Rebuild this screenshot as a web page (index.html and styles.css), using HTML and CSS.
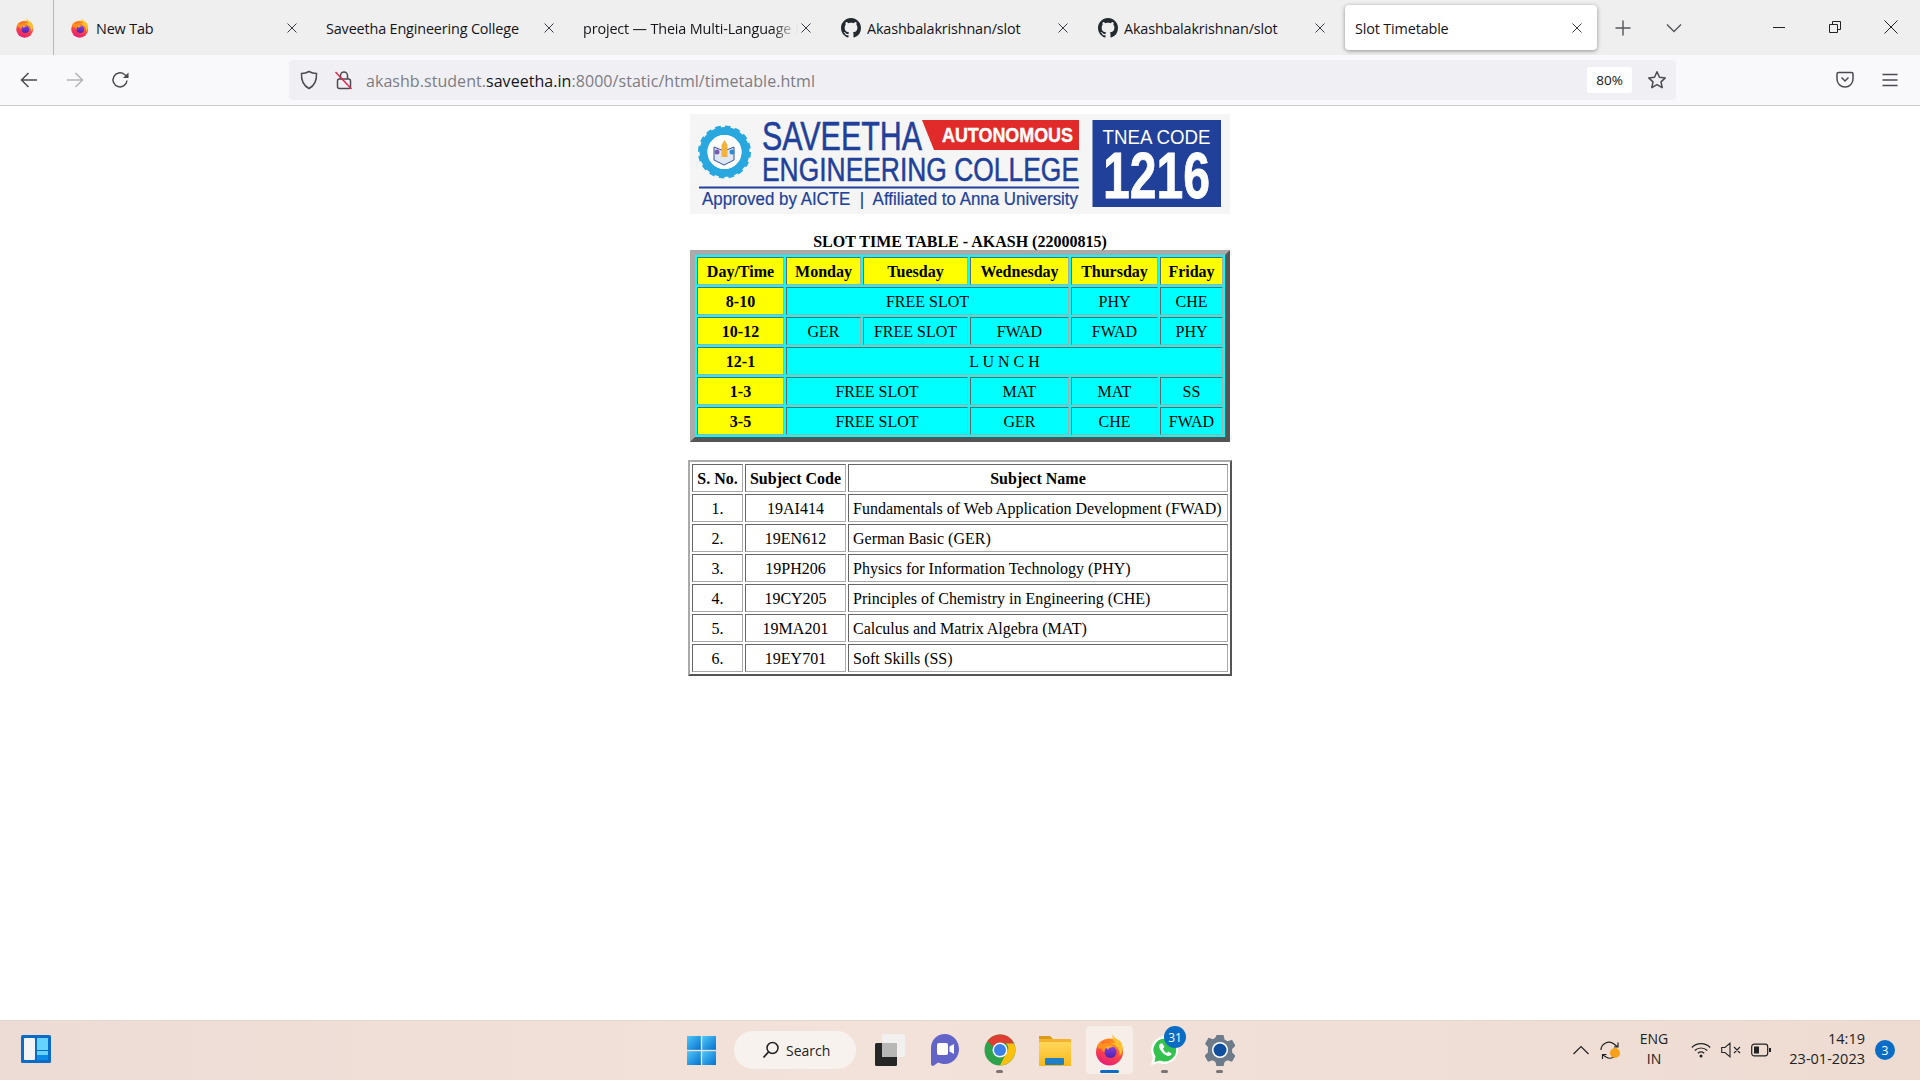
FILE: index.html
```html
<!DOCTYPE html>
<html lang="en">
<head>
<meta charset="utf-8">
<title>Slot Timetable</title>
<link rel="stylesheet" href="styles.css">
</head>
<body>
<svg class="defs" width="0" height="0" aria-hidden="true">
  <defs>
    <linearGradient id="ffBase" x1="0.7" y1="0" x2="0.3" y2="1">
      <stop offset="0" stop-color="#ff9a16"/><stop offset="0.5" stop-color="#ff4a3e"/><stop offset="1" stop-color="#e5197f"/>
    </linearGradient>
    <linearGradient id="ffCore" x1="0.5" y1="0" x2="0.5" y2="1">
      <stop offset="0" stop-color="#8a3fe0"/><stop offset="1" stop-color="#4b24b0"/>
    </linearGradient>
    <linearGradient id="winBlue" x1="0" y1="0" x2="1" y2="1">
      <stop offset="0" stop-color="#4fc8f8"/><stop offset="1" stop-color="#0670d0"/>
    </linearGradient>
    <linearGradient id="folderFront" x1="0" y1="0" x2="0" y2="1">
      <stop offset="0" stop-color="#ffd75a"/><stop offset="1" stop-color="#f9b81c"/>
    </linearGradient>
    <symbol id="firefox" viewBox="2 0 28 32">
      <circle cx="15.500" cy="18" r="13.500" fill="url(#ffBase)"/>
      <path d="M18.500 0c-.5 4 1 7 3 9-2.500-.5-4-.5-6 0 3 .5 6 2 8 5 2 3 2.500 5 2 8 3-3 4-8 2.500-12-1-2.500-3-4-4.500-4.500C21 4 19 2 18.500 0z" fill="#ffc22e"/>
      <path d="M3 12.500C4 9.500 6 7.500 8 6.500c-.5 1.500-.3 2.700.3 3.500 3-2 8-1.500 11 1 2 1.500 3 4 3 6-2-3-5-4-8-3-3 1-3 3-2 5-3-1-5-3-5.500-5-1 1-3 2.500-2.800-1.500z" fill="#ff8f1f"/>
      <circle cx="16.500" cy="18" r="6" fill="url(#ffCore)"/>
      <path d="M11 14c2-2.500 6-2.800 8.500-1-2.500 0-5 .8-5.500 3-.5-1.500-1.500-2-3-2z" fill="#ffae2a"/>
    </symbol>
    <symbol id="github" viewBox="0 0 16 16">
      <path fill="#24292f" d="M8 0C3.580 0 0 3.580 0 8c0 3.540 2.290 6.530 5.470 7.590.4.070.55-.17.55-.38 0-.19-.01-.82-.01-1.490-2.010.37-2.530-.49-2.690-.94-.09-.23-.48-.94-.82-1.130-.28-.15-.68-.52-.01-.53.63-.01 1.080.58 1.230.82.72 1.210 1.870.87 2.330.66.070-.52.28-.87.51-1.070-1.780-.2-3.640-.89-3.640-3.950 0-.87.31-1.590.82-2.150-.08-.2-.36-1.020.08-2.120 0 0 .67-.21 2.200.82.64-.18 1.320-.27 2-.27.68 0 1.360.09 2 .27 1.530-1.040 2.200-.82 2.200-.82.44 1.100.16 1.920.08 2.120.51.56.82 1.270.82 2.150 0 3.070-1.870 3.750-3.650 3.950.29.25.54.73.54 1.480 0 1.070-.01 1.930-.01 2.200 0 .21.15.46.55.38A8.013 8.013 0 0016 8c0-4.420-3.580-8-8-8z"/>
    </symbol>
    <symbol id="close" viewBox="0 0 12 12">
      <path d="M1.500 1.500l9 9M10.500 1.500l-9 9" fill="none" stroke="#3a3a40" stroke-width="1"/>
    </symbol>
  </defs>
</svg>

<header class="tabstrip">
  <div class="app-slot"><svg class="ico-20"><use href="#firefox"/></svg></div>
  <div class="tabs">
    <div class="tab"><svg class="ico-20 tab-ico"><use href="#firefox"/></svg><span class="tab-title">New Tab</span><svg class="tab-x"><use href="#close"/></svg></div>
    <div class="tab tab-plain"><span class="tab-title">Saveetha Engineering College</span><svg class="tab-x"><use href="#close"/></svg></div>
    <div class="tab tab-plain"><span class="tab-title tab-fade">project — Theia Multi-Language IDE</span><svg class="tab-x"><use href="#close"/></svg></div>
    <div class="tab"><svg class="ico-20 tab-ico"><use href="#github"/></svg><span class="tab-title">Akashbalakrishnan/slot</span><svg class="tab-x"><use href="#close"/></svg></div>
    <div class="tab"><svg class="ico-20 tab-ico"><use href="#github"/></svg><span class="tab-title">Akashbalakrishnan/slot</span><svg class="tab-x"><use href="#close"/></svg></div>
    <div class="tab tab-active"><span class="tab-title">Slot Timetable</span><svg class="tab-x"><use href="#close"/></svg></div>
  </div>
  <div class="strip-btn strip-new"><svg width="18" height="18" viewBox="0 0 18 18"><path d="M9 1.500v15M1.500 9h15" stroke="#55555c" stroke-width="1.400" fill="none"/></svg></div>
  <div class="strip-btn strip-more"><svg width="18" height="18" viewBox="0 0 18 18"><path d="M2 5.500l7 7 7-7" stroke="#55555c" stroke-width="1.400" fill="none"/></svg></div>
  <div class="window-ctrls">
    <div class="win-btn"><svg width="14" height="14" viewBox="0 0 14 14"><path d="M1 7.500h12" stroke="#222" fill="none"/></svg></div>
    <div class="win-btn"><svg width="14" height="14" viewBox="0 0 14 14"><path d="M1.500 4.500h8v8h-8zM4.500 4.500v-3h8v8h-3" stroke="#222" fill="none"/></svg></div>
    <div class="win-btn"><svg width="14" height="14" viewBox="0 0 14 14"><path d="M.5.500l13 13M13.500.500l-13 13" stroke="#222" fill="none"/></svg></div>
  </div>
</header>

<nav class="toolbar">
  <div class="nav-btn"><svg width="20" height="20" viewBox="0 0 20 20"><path d="M18 10H2.500M9.500 3l-7 7 7 7" fill="none" stroke="#4a4a50" stroke-width="1.500"/></svg></div>
  <div class="nav-btn"><svg width="20" height="20" viewBox="0 0 20 20"><path d="M2 10h15.500M10.500 3l7 7-7 7" fill="none" stroke="#b4b4b8" stroke-width="1.500"/></svg></div>
  <div class="nav-btn"><svg width="20" height="20" viewBox="0 0 20 20"><path d="M16 10.500a7 7 0 1 1-2.500-6L17 7" fill="none" stroke="#4a4a50" stroke-width="1.500"/><path d="M17.500 2.500v5.500H12z" fill="#4a4a50"/></svg></div>
  <div class="urlbar">
    <svg class="url-ico" width="20" height="20" viewBox="0 0 20 20"><path d="M10 1.500c2.500 1.500 5 2 7.500 2 .3 6.500-1.500 12-7.500 15-6-3-7.800-8.500-7.500-15 2.500 0 5-.5 7.500-2z" fill="none" stroke="#4a4a50" stroke-width="1.500"/></svg>
    <svg class="url-ico url-lock" width="20" height="20" viewBox="0 0 20 20"><rect x="3.500" y="9" width="13" height="9.500" rx="2" fill="none" stroke="#4a4a50" stroke-width="1.500"/><path d="M6.500 9V5.500a3.500 3.500 0 0 1 7 0V9" fill="none" stroke="#4a4a50" stroke-width="1.500"/><path d="M1.500 2l16 17" stroke="#e22850" stroke-width="1.500"/></svg>
    <div class="url-text">akashb.student.<span class="url-domain">saveetha.in</span>:8000/static/html/timetable.html</div>
    <div class="zoom-badge">80%</div>
    <svg class="url-star" width="20" height="20" viewBox="0 0 20 20"><path d="M10 1.800l2.500 5.400 5.800.7-4.300 4 1.200 5.800-5.200-3-5.200 3 1.200-5.800-4.300-4 5.800-.7z" fill="none" stroke="#4a4a50" stroke-width="1.500" stroke-linejoin="round"/></svg>
  </div>
  <div class="tool-right">
    <div class="tool-btn"><svg width="20" height="20" viewBox="0 0 20 20"><path d="M3.500 2.500h13A1.500 1.500 0 0 1 18 4v5a8 8 0 0 1-16 0V4a1.500 1.500 0 0 1 1.500-1.500z" fill="none" stroke="#4a4a50" stroke-width="1.500"/><path d="M6.500 7.500L10 11l3.500-3.500" fill="none" stroke="#4a4a50" stroke-width="1.500"/></svg></div>
    <div class="tool-btn"><svg width="20" height="20" viewBox="0 0 20 20"><path d="M2.500 4.500h15M2.500 10h15M2.500 15.500h15" fill="none" stroke="#4a4a50" stroke-width="1.500"/></svg></div>
  </div>
</nav>

<main class="page">
  <svg class="logo" width="540" height="100" viewBox="0 0 540 100" role="img" aria-label="Saveetha Engineering College">
    <rect width="540" height="100" fill="#f5f5f5"/>
    <circle cx="34.500" cy="38" r="21" fill="none" stroke="#29a8df" stroke-width="8"/>
    <circle cx="34.500" cy="38" r="24.500" fill="none" stroke="#29a8df" stroke-width="4" stroke-dasharray="5.500 4.100"/>
    <circle cx="34.500" cy="38" r="17" fill="#fff"/>
    <path d="M24 33l10 4 10-4v13l-10 5-10-5z" fill="#dfe6f4" stroke="#31509f" stroke-width="1"/>
    <path d="M34.500 26l3 5v12h-6V31z" fill="#f3b23a"/>
    <circle cx="27" cy="38" r="2.500" fill="#7a5bb0"/><circle cx="42" cy="38" r="2.500" fill="#2c8fd0"/>
    <g class="logo-blue">
      <text class="logo-big" x="72" y="36" textLength="160" lengthAdjust="spacingAndGlyphs">SAVEETHA</text>
      <text class="logo-mid" x="72" y="67" textLength="317" lengthAdjust="spacingAndGlyphs">ENGINEERING COLLEGE</text>
      <text class="logo-sub" x="12" y="91" textLength="376" lengthAdjust="spacingAndGlyphs">Approved by AICTE  |  Affiliated to Anna University</text>
    </g>
    <path d="M232 6h157v30H244z" fill="#e12a2a"/>
    <text class="logo-auto" x="252" y="28" textLength="131" lengthAdjust="spacingAndGlyphs">AUTONOMOUS</text>
    <rect x="9" y="72.500" width="380" height="2" fill="#21409a"/>
    <rect x="402.500" y="6" width="128.500" height="87" fill="#21409a"/>
    <text class="logo-tnea" x="412.500" y="30" textLength="108" lengthAdjust="spacingAndGlyphs">TNEA CODE</text>
    <text class="logo-code" x="413" y="84" textLength="107" lengthAdjust="spacingAndGlyphs">1216</text>
  </svg>

  <table class="tbl slot">
    <caption class="slot-caption">SLOT TIME TABLE - AKASH (22000815)</caption>
    <colgroup><col class="s1"><col class="s2"><col class="s3"><col class="s4"><col class="s5"><col class="s6"></colgroup>
    <tr><th class="hd">Day/Time</th><th class="hd">Monday</th><th class="hd">Tuesday</th><th class="hd">Wednesday</th><th class="hd">Thursday</th><th class="hd">Friday</th></tr>
    <tr><th class="hd">8-10</th><td colspan="3">FREE SLOT</td><td>PHY</td><td>CHE</td></tr>
    <tr><th class="hd">10-12</th><td>GER</td><td>FREE SLOT</td><td>FWAD</td><td>FWAD</td><td>PHY</td></tr>
    <tr><th class="hd">12-1</th><td colspan="5">L U N C H</td></tr>
    <tr><th class="hd">1-3</th><td colspan="2">FREE SLOT</td><td>MAT</td><td>MAT</td><td>SS</td></tr>
    <tr><th class="hd">3-5</th><td colspan="2">FREE SLOT</td><td>GER</td><td>CHE</td><td>FWAD</td></tr>
  </table>

  <table class="tbl subjects">
    <colgroup><col class="c1"><col class="c2"><col class="c3"></colgroup>
    <tr><th>S. No.</th><th>Subject Code</th><th>Subject Name</th></tr>
    <tr><td>1.</td><td>19AI414</td><td class="name">Fundamentals of Web Application Development (FWAD)</td></tr>
    <tr><td>2.</td><td>19EN612</td><td class="name">German Basic (GER)</td></tr>
    <tr><td>3.</td><td>19PH206</td><td class="name">Physics for Information Technology (PHY)</td></tr>
    <tr><td>4.</td><td>19CY205</td><td class="name">Principles of Chemistry in Engineering (CHE)</td></tr>
    <tr><td>5.</td><td>19MA201</td><td class="name">Calculus and Matrix Algebra (MAT)</td></tr>
    <tr><td>6.</td><td>19EY701</td><td class="name">Soft Skills (SS)</td></tr>
  </table>
</main>

<footer class="taskbar">
  <div class="tb-left">
    <svg width="30" height="28" viewBox="0 0 30 28"><rect width="30" height="28" rx="1.500" fill="#0a6cc4"/><rect x="3" y="3" width="11" height="22" rx="1" fill="#f4f4f4"/><rect x="16" y="3" width="11" height="22" fill="#66d2ff"/><rect x="16" y="15" width="11" height="1" fill="#0a6cc4"/><rect x="16" y="20" width="11" height="5" fill="#0a8be8"/></svg>
  </div>
  <div class="tb-center">
    <div class="tb-slot"><svg width="29" height="29" viewBox="0 0 30 30"><rect x="0" y="0" width="14.300" height="14.300" fill="url(#winBlue)"/><rect x="15.700" y="0" width="14.300" height="14.300" fill="url(#winBlue)"/><rect x="0" y="15.700" width="14.300" height="14.300" fill="url(#winBlue)"/><rect x="15.700" y="15.700" width="14.300" height="14.300" fill="url(#winBlue)"/></svg></div>
    <div class="tb-search"><svg width="18" height="18" viewBox="0 0 18 18"><circle cx="10.500" cy="7" r="5.500" fill="none" stroke="#222" stroke-width="1.500"/><path d="M6.500 11L1.500 16.500" stroke="#222" stroke-width="1.800"/></svg><span>Search</span></div>
    <div class="tb-slot"><svg width="30" height="32" viewBox="0 0 30 32"><rect x="0" y="9" width="22" height="23" rx="1.500" fill="#262626"/><rect x="7" y="0" width="23" height="23" rx="1.500" fill="#f3f1ef"/><rect x="7" y="9" width="15" height="14" fill="#b9b7b5"/></svg></div>
    <div class="tb-slot"><svg width="30" height="34" viewBox="0 0 30 34"><path d="M15 1C7 1 1 7 1 15v16c0 1.500 1.500 2.500 3 1.500l4-3c2 .8 4.500 1.500 7 1.500 8 0 14-7 14-15S23 1 15 1z" fill="#6264c8"/><rect x="7" y="10" width="11" height="12" rx="2" fill="#fff"/><path d="M19.500 13.500l4.500-2.500v10l-4.500-2.500z" fill="#fff"/></svg></div>
    <div class="tb-slot tb-dot"><svg width="32" height="34" viewBox="0 0 32 34"><circle cx="16" cy="17" r="15.500" fill="#2ea24b"/><path d="M16 1.500A15.500 15.500 0 0 1 30 10.500H16a6.500 6.500 0 0 0-6 4L3.500 8A15.500 15.500 0 0 1 16 1.500z" fill="#dd3e31"/><path d="M30 10.500A15.500 15.500 0 0 1 16 32.500l6-12a6.500 6.500 0 0 0 0-10z" fill="#fbc00d"/><circle cx="16" cy="17" r="7.500" fill="#fff"/><circle cx="16" cy="17" r="6" fill="#3b7fe8"/></svg></div>
    <div class="tb-slot"><svg width="32" height="32" viewBox="0 0 32 32"><path d="M0 2h11l3 3h-14z" fill="#d99c1a"/><rect x="0" y="5" width="32" height="27" rx="1" fill="#f4b32a"/><rect x="0" y="8" width="32" height="24" rx="1" fill="url(#folderFront)"/><rect x="6" y="24" width="19" height="7" rx="1" fill="#1f80c8"/></svg></div>
    <div class="tb-slot tb-active"><svg width="28" height="32"><use href="#firefox"/></svg></div>
    <div class="tb-slot tb-dot"><svg width="30" height="32" viewBox="0 0 30 32"><path d="M15 2a14 14 0 0 0-12 21L1 31l8-2a14 14 0 1 0 6-27z" fill="#fff"/><path d="M15 4.500A11.500 11.500 0 0 0 5.500 22.500L4.500 28l5.500-1.500A11.500 11.500 0 1 0 15 4.500z" fill="#33c24e"/><path d="M10.500 9.500c-1.500 1-2 3 0 6.500s5 5.500 7.500 6c2 .3 3.500-1 3.500-2.500l-3-2-1.500 1.500c-2-1-3.500-2.500-4-4.500l1.500-1.500-2-3.500z" fill="#fff"/></svg><span class="count-badge">31</span></div>
    <div class="tb-slot tb-dot"><svg width="30" height="32" viewBox="0 0 30 32"><path d="M11.500 1h7l1 4.500 3 1.700 4.500-1.400 3.500 6-3.400 3.200v3.500l3.400 3.200-3.500 6-4.500-1.400-3 1.700-1 4.500h-7l-1-4.500-3-1.700-4.500 1.400-3.500-6 3.400-3.200V13L0 9.800l3.500-6L8 5.200l2.500-1.700z" fill="#6c7a89"/><circle cx="15" cy="16" r="8" fill="#fff"/><circle cx="15" cy="16" r="6.500" fill="#0f4f9e"/></svg></div>
  </div>
  <div class="tray">
    <div class="tray-slot"><svg width="16" height="10" viewBox="0 0 16 10"><path d="M.5 9L8 1.500 15.500 9" fill="none" stroke="#222" stroke-width="1.200"/></svg></div>
    <div class="tray-slot tray-sync"><svg width="22" height="22" viewBox="0 0 22 22"><path d="M1 11a8 8 0 0 1 13-6l3 2.500M14 8h4V3.500M16 16.500A8 8 0 0 1 6 18l-3-2M6.500 15.500h-4V20" fill="none" stroke="#222" stroke-width="1.200"/><circle cx="15" cy="14" r="5" fill="#f7a11a"/></svg></div>
    <div class="tray-lang"><span>ENG</span><span>IN</span></div>
    <div class="tray-slot"><svg width="20" height="16" viewBox="0 0 20 16"><path d="M.8 5.500a13 13 0 0 1 18.400 0M3.800 8.500a9 9 0 0 1 12.400 0M6.800 11.300a5 5 0 0 1 6.400 0" fill="none" stroke="#222" stroke-width="1.200"/><circle cx="10" cy="14" r="1.500" fill="#222"/></svg></div>
    <div class="tray-slot"><svg width="20" height="16" viewBox="0 0 20 16"><path d="M.7 5.500h3.300L9 1.200v13.600L4 10.500H.7zM13 5l6 6M19 5l-6 6" fill="none" stroke="#222" stroke-width="1.100"/></svg></div>
    <div class="tray-slot"><svg width="20" height="14" viewBox="0 0 20 14"><rect x=".7" y="1.200" width="16" height="11.600" rx="2.500" fill="none" stroke="#222" stroke-width="1.200"/><rect x="3" y="3.500" width="5" height="7" fill="#222"/><rect x="18" y="5" width="2" height="4" fill="#222"/></svg></div>
    <div class="tray-clock"><span>14:19</span><span>23-01-2023</span></div>
    <div class="notify">3</div>
  </div>
</footer>
</body>
</html>
```
FILE: styles.css
```css
* { box-sizing: border-box; }
html, body { margin: 0; padding: 0; height: 100%; }
body {
  width: 1920px; height: 1080px; overflow: hidden;
  display: flex; flex-direction: column;
  background: #fff; color: #15141a;
  font-family: "Open Sans", "Noto Sans", sans-serif;
}
svg { display: block; flex: none; }
.defs { position: absolute; }
.ico-20 { width: 20px; height: 20px; }

/* tab strip */
.tabstrip { height: 55px; flex: none; display: flex; background: #efefef; }
.app-slot {
  width: 54px; border-right: 1px solid #b8b8b8; padding: 18px 0 0 15px; flex: none;
}
.tabs { display: flex; gap: 5px; margin: 5px 0 0 6px; height: 45px; }
.tab {
  width: 252px; height: 45px; padding: 0 12px 0 10px;
  display: flex; align-items: center;
  font-size: 14.400px; letter-spacing: -0.150px; border-radius: 4px;
}
.tab-plain { padding-left: 9px; }
.tab-ico { margin-right: 6px; }
.tab-title { flex: 1; white-space: nowrap; overflow: hidden; margin-top: 1px; }
.tab-fade { -webkit-mask-image: linear-gradient(to right, #000 88%, transparent); mask-image: linear-gradient(to right, #000 88%, transparent); }
.tab-x { width: 12px; height: 12px; margin: 0 2px; }
.tab-active { background: #fff; box-shadow: 0 1px 4px rgba(0,0,0,.4); }
.strip-btn { width: 40px; height: 55px; display: flex; align-items: center; justify-content: center; }
.strip-new { margin-left: 6px; }
.strip-more { margin-left: 11px; }
.window-ctrls { margin-left: auto; padding-right: 1px; display: flex; }
.win-btn { width: 56px; height: 54px; display: flex; align-items: center; justify-content: center; }

/* toolbar */
.toolbar {
  height: 51px; flex: none; display: flex; align-items: flex-start;
  background: #f9f9fb; border-bottom: 1px solid #ccc; padding: 5px 0 0 6px;
}
.nav-btn { width: 46px; height: 40px; display: flex; align-items: center; justify-content: center; }
.urlbar {
  width: 1387px; height: 40px; margin-left: 145px;
  display: flex; align-items: center; padding-left: 10px;
  background: #f0f0f4; border-radius: 4px;
}
.url-lock { margin-left: 15px; }
.url-text { flex: 1; margin: 2px 0 0 12px; font-size: 16px; letter-spacing: 0.050px; color: #7c7c82; white-space: nowrap; }
.url-domain { color: #15141a; }
.zoom-badge {
  width: 45px; height: 26px; background: #fff; border-radius: 3px;
  display: flex; align-items: center; justify-content: center; font-size: 13.500px;
}
.url-star { margin: 0 9px 0 15px; }
.tool-right { margin-left: auto; padding-right: 8px; display: flex; }
.tool-btn { width: 45px; height: 40px; display: flex; align-items: center; justify-content: center; }

/* page */
.page {
  flex: 1; display: flex; flex-direction: column; align-items: center;
  padding-top: 8px;
  font-family: "Liberation Serif", "Times New Roman", serif; font-size: 16px; color: #000;
}
.logo { width: 540px; height: 100px; }
.logo-blue { fill: #21409a; stroke: #21409a; stroke-width: 0.500px; font-family: "Liberation Sans", sans-serif; }
.logo-big { font-size: 40px; }
.logo-mid { font-size: 34px; }
.logo-sub { font-size: 18px; white-space: pre; stroke-width: 0.200px; }
.logo-auto { font: bold 20px "Liberation Sans", sans-serif; fill: #fff; stroke: #fff; stroke-width: 0.400px; }
.logo-tnea { font: 20px "Liberation Sans", sans-serif; fill: #fff; }
.logo-code { font: bold 65px "Liberation Sans", sans-serif; fill: #fff; stroke: #fff; stroke-width: 0.800px; }

.tbl { table-layout: fixed; border-collapse: separate; border-spacing: 2px; border-style: solid; }
.tbl th, .tbl td {
  height: 28px; padding: 2px 0 0; text-align: center; vertical-align: middle;
  border: 1px solid; border-color: #666 #aaa #aaa #666;
}
.tbl tr { height: 28px; }
.slot { width: 540px; border-width: 5px; border-color: #aaa #555 #555 #aaa; background: #0ff; margin-top: 18px; }
.slot-caption { font-weight: bold; padding-top: 2px; line-height: 16px; white-space: nowrap; caption-side: top; }
.slot td { background: #0ff; }
.slot .hd { background: #ff0; }
.s1 { width: 87px; } .s2 { width: 75px; } .s3 { width: 105px; }
.s4 { width: 99px; } .s5 { width: 87px; } .s6 { width: 63px; }
.subjects { width: 544px; border-width: 2px; border-color: #aaa #555 #555 #aaa; margin-top: 18px; }
.c1 { width: 51px; } .c2 { width: 101px; } .c3 { width: 380px; }
.subjects .name { text-align: left; padding-left: 4px; white-space: nowrap; }

/* taskbar */
.taskbar {
  height: 60px; flex: none; display: flex; align-items: center;
  box-shadow: inset 0 1px 0 #e6d6cd;
  background: linear-gradient(to right, #ecdcd5, #f2e2d9 45%, #f0dfd6 70%, #eedcd3);
}
.tb-left { width: 674px; flex: none; padding-left: 21px; margin-top: -2px; }
.tb-center { display: flex; align-items: center; }
.tb-slot { width: 55px; height: 48px; position: relative; display: flex; align-items: center; justify-content: center; }
.tb-search {
  width: 122px; height: 38px; margin: 0 6px 0 5px; border-radius: 19px; background: #f8f2ef;
  display: flex; align-items: center; padding-left: 28px; gap: 6px; font-size: 14px; color: #222;
}
.tb-active { background: #f7eee9; border-radius: 4px; width: 47px; margin: 0 4px; }
.tb-active::after { content: ""; position: absolute; left: 14px; bottom: 1px; width: 19px; height: 3px; border-radius: 2px; background: #0a6cc4; }
.tb-dot::after {
  content: ""; position: absolute; left: 24px; bottom: 1px; width: 7px; height: 3px; border-radius: 2px; background: #7b7472;
}
.count-badge {
  position: absolute; left: 27px; top: 0; width: 22px; height: 22px; border-radius: 50%;
  background: #0a6cc4; color: #fff; font-size: 12px; display: flex; align-items: center; justify-content: center;
}
.tray { margin-left: auto; padding-right: 25px; display: flex; align-items: center; font-size: 14px; color: #222; }
.tray-slot { width: 30px; height: 40px; display: flex; align-items: center; justify-content: center; }
.tray-lang { width: 56px; margin: -2px 4px 0 0; display: flex; flex-direction: column; align-items: center; line-height: 20px; }
.tray-clock { width: 89px; margin-top: -3px; display: flex; flex-direction: column; align-items: flex-end; line-height: 20px; font-size: 14.500px; }
.notify {
  width: 20px; height: 20px; margin-left: 10px; border-radius: 50%; background: #0a6cc4; color: #fff;
  display: flex; align-items: center; justify-content: center; font-size: 12px;
}
```
